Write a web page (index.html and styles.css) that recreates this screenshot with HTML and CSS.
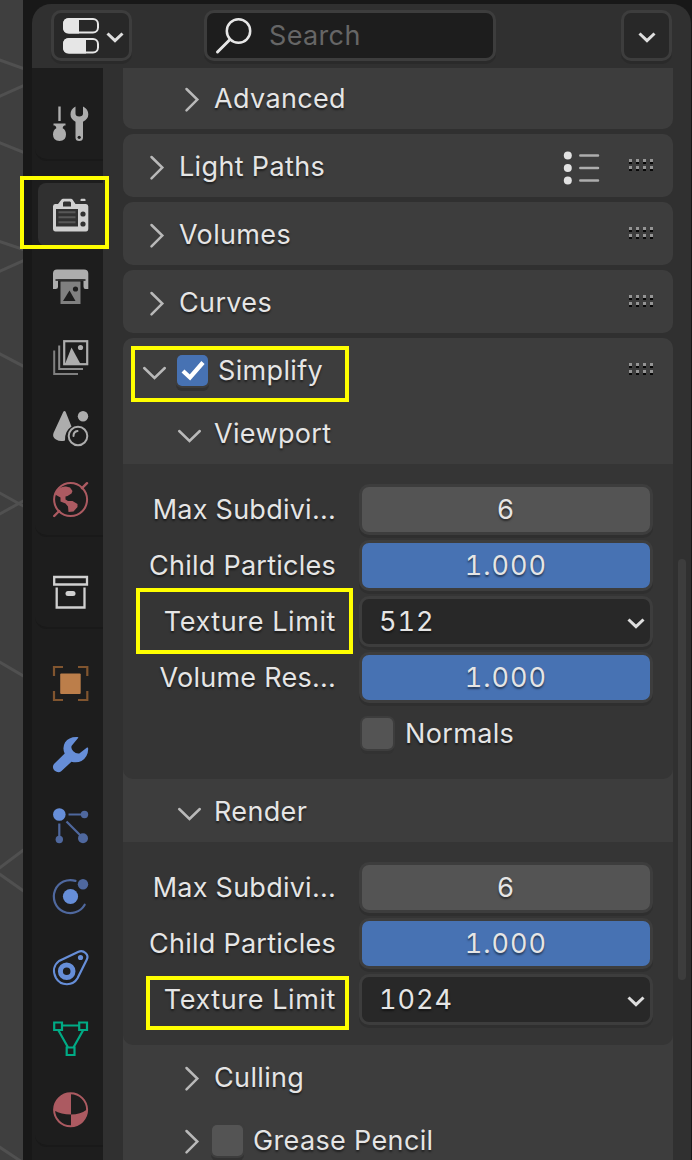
FILE: index.html
```html
<!DOCTYPE html>
<html lang="en">
<head>
    <meta charset="UTF-8">
    <meta name="viewport" content="width=device-width, initial-scale=1.0">
    <title>Render Properties</title>
    <link rel="stylesheet" href="styles.css">
</head>
<body>

<!-- shared icons -->
<svg class="defs" width="0" height="0">
    <symbol id="right" viewBox="0 0 32 31"><path d="M12.5 7 L23.3 17.6 L12.5 28.3" fill="none" stroke="#b9b9b9" stroke-width="2.5" stroke-linecap="round"/></symbol>
    <symbol id="down" viewBox="0 0 32 31"><path d="M5.2 14 L15.5 24 L25.8 14" fill="none" stroke="#b9b9b9" stroke-width="2.5" stroke-linecap="round"/></symbol>
    <symbol id="arrow" viewBox="0 0 18 11"><path d="M1.5 1.5 L9 8.7 L16.5 1.5" fill="none" stroke="#dedede" stroke-width="3"/></symbol>
    <symbol id="grip" viewBox="0 0 24 12">
        <path d="M0 1.5H24M0 8.5H24" stroke="#959595" stroke-width="3" stroke-dasharray="3 4"/>
        <path d="M0 4H24M0 11H24" stroke="#080808" stroke-width="2" stroke-dasharray="3 4"/>
    </symbol>
</svg>

<div class="app">
    <div class="viewport">
        <svg width="23" height="1160" fill="none" stroke="#505050" stroke-width="3">
            <path d="M-2 59.5 L25 69M-2 97 L25 85M-2 142 L25 153M-2 241 L25 250M-2 272 L25 260M-2 353 L25 367M-2 492 L25 507M-2 515 L25 500M-2 661 L25 677M-2 869 L25 849M-2 873 L25 892M-2 1146 L25 1164"/>
        </svg>
    </div>

    <div class="editor">
        <header class="header">
            <button class="btn editor-type">
                <svg width="36" height="36" viewBox="0 0 36 36">
                    <rect x="1" y="1" width="34" height="13.5" rx="5" fill="none" stroke="#e6e6e6" stroke-width="2"/>
                    <path d="M16 0H6Q0 0 0 6V9.500Q0 15.500 6 15.500H16Z" fill="#e6e6e6"/>
                    <rect x="1" y="21" width="34" height="13.500" rx="5" fill="none" stroke="#e6e6e6" stroke-width="2"/>
                    <path d="M23 20H6Q0 20 0 26V29.500Q0 35.500 6 35.500H23Z" fill="#e6e6e6"/>
                </svg>
                <svg width="18" height="11"><use href="#arrow"/></svg>
            </button>
            <div class="search">
                <svg width="36" height="36" viewBox="0 0 36 36" fill="none" stroke="#e6e6e6">
                    <circle cx="22.500" cy="13" r="11.700" stroke-width="2.500"/>
                    <path d="M14 21.500 L1.500 34" stroke-width="3" stroke-linecap="round"/>
                </svg>
                <span>Search</span>
            </div>
            <button class="btn options"><svg width="18" height="11"><use href="#arrow"/></svg></button>
        </header>

        <div class="main">
            <nav class="tabs">
                <div class="group">
                    <div class="tab">
                        <svg width="36" height="36" viewBox="0 0 36 36" fill="#adadad">
                            <path d="M5.300 0.500H7.700V15H5.300ZM0.500 17.500H12.500V19.500H11.200Q9.500 20.500 9.700 22.300Q13 24.200 13 28.500Q13 35 6.500 35Q0 35 0 28.500Q0 24.200 3.300 22.300Q3.500 20.500 1.800 19.500H0.500Z"/>
                            <path d="M22.500 0.500V7.500Q22.500 10.500 26.200 10.500Q30 10.500 30 7.500V0.500Q35.300 3 35.300 8.500Q35.300 13 30 15.800V31.500Q30 35 26.200 35Q22.500 35 22.500 31.500V15.800Q17.500 13 17.500 8.500Q17.500 3 22.500 0.500Z"/>
                            <circle cx="26.200" cy="31.300" r="1.600" fill="#1d1d1d"/>
                        </svg>
                    </div>
                </div>
                <div class="group">
                    <div class="tab active">
                        <svg width="36" height="36" viewBox="0 0 36 36">
                            <path d="M2 6H5L8.500 1.500Q9 0.800 10 0.800H18Q19 0.800 19.500 1.500L22.500 6H33Q35.300 6 35.300 8.500V30.500Q35.300 33.500 33 33.500H2.500Q0 33.500 0 30.500V8.500Q0 6 2 6Z" fill="#cfcfcf"/>
                            <path d="M11 3.500H17L18 4.500V8.500H10V4.500ZM3 11H25V28.500H3Z" fill="#303030"/>
                            <path d="M5.500 14.200H22.500M5.500 19.200H22.500M5.500 24.300H22.500" stroke="#575757" stroke-width="2"/>
                            <circle cx="30" cy="16" r="2.600" fill="#303030"/><circle cx="30" cy="26" r="2.600" fill="#303030"/>
                            <path d="M27.500 3V1.800Q27.500 0.800 28.500 0.800H31.500Q32.500 0.800 32.500 1.800V3Z" fill="#cfcfcf"/>
                        </svg>
                    </div>
                    <div class="tab">
                        <svg width="36" height="36" viewBox="0 0 36 36">
                            <path d="M4 0.500H31Q35.300 0.500 35.300 4.500V20H32.500Q30.500 20 30.500 17.500V10.500H5V17.500Q5 20 2.500 20H0V4.500Q0 0.500 4 0.500Z" fill="#adadad"/>
                            <path d="M2.500 11H32.500" stroke="#303030" stroke-width="1.800"/>
                            <rect x="7.500" y="12.500" width="20" height="22.500" fill="#808080"/>
                            <path d="M10 32L16.500 21.500L22.500 32Z" fill="#1d1d1d"/><circle cx="22.500" cy="20" r="2.600" fill="#1d1d1d"/>
                        </svg>
                    </div>
                    <div class="tab">
                        <svg width="36" height="36" viewBox="0 0 36 36">
                            <path d="M1.200 10.500V34H25" fill="none" stroke="#808080" stroke-width="2"/>
                            <path d="M6.200 5.500V29H30" fill="none" stroke="#8d8d8d" stroke-width="2"/>
                            <rect x="11.200" y="1.200" width="23" height="23" fill="none" stroke="#adadad" stroke-width="2.200"/>
                            <path d="M12 24L18.500 7.500L27.500 24Z" fill="#adadad"/><circle cx="27.500" cy="7.500" r="2.600" fill="#adadad"/>
                        </svg>
                    </div>
                    <div class="tab">
                        <svg width="36" height="36" viewBox="0 0 36 36">
                            <path d="M11.500 0Q10.700 0 10.200 1L0.500 22Q-1 26 3 28.500Q7 31 12 29.500Q11.500 20 18.500 15.500L12.700 1Q12.300 0 11.500 0Z" fill="#adadad"/>
                            <circle cx="30" cy="5.200" r="5.200" fill="#adadad"/>
                            <circle cx="25" cy="25" r="9.300" fill="none" stroke="#adadad" stroke-width="2"/>
                            <path d="M20.500 25Q20.500 20.500 24.500 20" fill="none" stroke="#adadad" stroke-width="2" stroke-linecap="round"/>
                        </svg>
                    </div>
                    <div class="tab">
                        <svg width="36" height="36" viewBox="0 0 36 36">
                            <circle cx="17.600" cy="17.600" r="16.500" fill="none" stroke="#ac5a61" stroke-width="2"/>
                            <path d="M29 6.200L34 1.200M6.200 29L1.200 34" stroke="#ac5a61" stroke-width="2.400" stroke-linecap="round"/>
                            <path d="M2.500 11Q6 4 13 4.500L17 5.500L19.500 9L18.500 11.500L14.500 14L12.500 14.500L12.500 17.500L15 19H19.500L24.500 22V25L20.500 29.500L15.500 30L15 24.500L12.500 21.500L7.500 19.500V15.500L3 13Z" fill="#ac5a61"/>
                        </svg>
                    </div>
                </div>
                <div class="group">
                    <div class="tab">
                        <svg width="36" height="36" viewBox="0 0 36 36" fill="none" stroke="#d0d0d0" stroke-width="2.300">
                            <path d="M1.200 3H34V10.500H1.200ZM3.700 13.500V33.500H31.500V13.500"/>
                            <rect x="12.500" y="17" width="10" height="5" rx="2.500" fill="#d0d0d0" stroke="none"/>
                        </svg>
                    </div>
                </div>
                <div class="group">
                    <div class="tab">
                        <svg width="36" height="36" viewBox="0 0 36 36">
                            <path d="M1 10V1H10M25 1H34.300V10M34.300 25V34H25M10 34H1V25" fill="none" stroke="#81552f" stroke-width="2.200"/>
                            <rect x="7.200" y="7.500" width="20.500" height="20.500" rx="1" fill="#bc7e4a"/>
                        </svg>
                    </div>
                    <div class="tab">
                        <svg width="36" height="36" viewBox="0 0 36 36">
                            <path d="M25.300 0.800L18.700 8.700Q17.500 11.500 20.300 14.200Q23 17 26.300 16.500L34 10.500Q35.300 10 35.200 12Q35 20 28.500 24Q24 26 18.500 24.700L8.500 34Q5.500 36.500 1.700 33.800Q-1.500 30.200 1 27L11.700 16.500Q9 11 12 5.500Q16 -0.500 24.500 0Q25.500 0.200 25.300 0.800Z" fill="#668ed8"/>
                        </svg>
                    </div>
                    <div class="tab">
                        <svg width="36" height="36" viewBox="0 0 36 36">
                            <path d="M15.500 6.500H31M6.300 15.500V31M13.500 13.500L30 30" stroke="#4f689e" stroke-width="2.200"/>
                            <circle cx="6.300" cy="6.500" r="6.300" fill="#668ed8"/><circle cx="31.500" cy="6.500" r="3.700" fill="#4f689e"/>
                            <circle cx="6.300" cy="31.500" r="3.700" fill="#4f689e"/><circle cx="30" cy="30.300" r="5" fill="#4f689e"/>
                        </svg>
                    </div>
                    <div class="tab">
                        <svg width="36" height="36" viewBox="0 0 36 36">
                            <path d="M22.500 1.900A16.500 16.500 0 1 0 31.700 25.700" fill="none" stroke="#4f689e" stroke-width="2.200" stroke-linecap="round"/>
                            <circle cx="17.500" cy="17.500" r="7.600" fill="#668ed8"/><circle cx="30" cy="5.200" r="5.200" fill="#4f689e"/>
                        </svg>
                    </div>
                    <div class="tab">
                        <svg width="36" height="36" viewBox="0 0 36 36" fill="none" stroke="#668ed8">
                            <path d="M6 11L25.500 1.800C30.500 -0.300 36.500 4.500 33.700 9.800L24.500 28.300C20 36 8 36.500 3 28C-0.500 21.500 0.800 15 6 11Z" stroke-width="2.200"/>
                            <circle cx="13.700" cy="21.200" r="6.300" stroke-width="5"/><circle cx="27.500" cy="7.500" r="2.600" fill="#668ed8" stroke="none"/>
                        </svg>
                    </div>
                    <div class="tab">
                        <svg width="36" height="36" viewBox="0 0 36 36" fill="none" stroke="#00ab85" stroke-width="2.200">
                            <path d="M1.200 1.500H9V9H1.200ZM26.200 1.500H34V9H26.200ZM13.700 26.500H21.500V34H13.700ZM9 4.500H26.200M5.500 9.500L14.800 26M30 9.500L20.700 26"/>
                        </svg>
                    </div>
                    <div class="tab">
                        <svg width="36" height="36" viewBox="0 0 36 36">
                            <circle cx="17.600" cy="17.800" r="16.500" fill="none" stroke="#ac5a61" stroke-width="2"/>
                            <path d="M18 1.300V22.500Q8 22.500 1.300 18.500V17.500Q2 2.500 18 1.300ZM18 22.500Q27.500 22.500 34 17.500Q33 33 18 34.300Z" fill="#ac5a61"/>
                        </svg>
                    </div>
                </div>
            </nav>

            <div class="panels">
                <section class="panel cut">
                    <div class="row sub"><svg class="chev"><use href="#right"/></svg><span class="title">Advanced</span></div>
                </section>
                <section class="panel">
                    <div class="row">
                        <svg class="chev"><use href="#right"/></svg><span class="title">Light Paths</span>
                        <svg class="preset" width="36" height="36" viewBox="0 0 36 36">
                            <path d="M16.300 5.500H34M16.300 18H34M16.300 30.500H34" stroke="#adadad" stroke-width="2.500" stroke-linecap="round"/>
                            <g fill="#e2e2e2"><circle cx="3.800" cy="5.500" r="4"/><circle cx="3.800" cy="18" r="4"/><circle cx="3.800" cy="30.500" r="4"/></g>
                        </svg>
                        <svg class="grip"><use href="#grip"/></svg>
                    </div>
                </section>
                <section class="panel">
                    <div class="row"><svg class="chev"><use href="#right"/></svg><span class="title">Volumes</span><svg class="grip"><use href="#grip"/></svg></div>
                </section>
                <section class="panel">
                    <div class="row"><svg class="chev"><use href="#right"/></svg><span class="title">Curves</span><svg class="grip"><use href="#grip"/></svg></div>
                </section>
                <section class="panel simplify">
                    <div class="row">
                        <svg class="chev"><use href="#down"/></svg>
                        <span class="check on">
                            <svg width="31" height="31" viewBox="0 0 31 31"><path d="M6 16L13 22.500L26 7.500" fill="none" stroke="#fff" stroke-width="4.300"/></svg>
                        </span>
                        <span class="title">Simplify</span>
                        <svg class="grip"><use href="#grip"/></svg>
                    </div>
                    <div class="row sub"><svg class="chev"><use href="#down"/></svg><span class="title">Viewport</span></div>
                    <div class="body">
                        <label>Max Subdivi...</label><div class="field number">6</div>
                        <label>Child Particles</label><div class="field slider">1.000</div>
                        <label class="wide">Texture Limit</label><div class="field select">512<svg width="18" height="11"><use href="#arrow"/></svg></div>
                        <label>Volume Res...</label><div class="field slider">1.000</div>
                        <div class="option"><span class="check"></span><span>Normals</span></div>
                    </div>
                    <div class="row sub"><svg class="chev"><use href="#down"/></svg><span class="title">Render</span></div>
                    <div class="body">
                        <label>Max Subdivi...</label><div class="field number">6</div>
                        <label>Child Particles</label><div class="field slider">1.000</div>
                        <label class="wide">Texture Limit</label><div class="field select">1024<svg width="18" height="11"><use href="#arrow"/></svg></div>
                    </div>
                    <div class="row sub"><svg class="chev"><use href="#right"/></svg><span class="title">Culling</span></div>
                    <div class="row sub"><svg class="chev"><use href="#right"/></svg><span class="check"></span><span class="title">Grease Pencil</span></div>
                </section>
            </div>
            <div class="scrollbar"></div>
        </div>
    </div>

    <!-- highlights -->
    <div class="mark mark-tab"></div>
    <div class="mark mark-simplify"></div>
    <div class="mark mark-viewport"></div>
    <div class="mark mark-render"></div>
</div>

</body>
</html>
```
FILE: styles.css
```css
* {
    box-sizing: border-box;
}
body {
    margin: 0;
    background: #181818;
    color: #e5e5e5;
    font-family: Inter, "Liberation Sans", sans-serif;
    font-size: 27px;
    line-height: 32px;
    letter-spacing: 0.35px;
    overflow: hidden;
}
svg {
    display: block;
    flex: none;
    overflow: visible;
}
.defs {
    position: absolute;
}
.app {
    position: relative;
    display: flex;
    width: 692px;
    height: 1160px;
    overflow: hidden;
}
.viewport {
    width: 23px;
    background: #3f3f3f;
    overflow: hidden;
}
.editor {
    width: 659px;
    height: 1156px;
    margin: 4px 1px 0 9px;
    background: #303030;
    border-radius: 19px 19px 0 0;
    overflow: hidden;
}

/* header */
.header {
    display: flex;
    height: 64px;
    padding: 6px 19px 0 19px;
}
.btn, .search {
    display: flex;
    align-items: center;
    height: 51px;
    padding: 0;
    border: 3px solid #3d3d3d;
    border-radius: 10px;
    background: #282828;
    box-shadow: 0 3px 0 #2a2a2a;
}
.editor-type {
    width: 81px;
    padding-left: 9px;
    gap: 7px;
}
.editor-type svg:last-child, .options svg {
    margin-top: 3px;
}
.search {
    width: 292px;
    margin-left: 72px;
    padding-left: 9px;
    gap: 17px;
    background: #1d1d1d;
    color: #666;
}
.options {
    width: 51px;
    margin-left: auto;
    justify-content: center;
}

.main {
    display: flex;
    height: 1092px;
}

/* tabs */
.tabs {
    width: 71px;
    padding-top: 20px;
    background: #1d1d1d;
}
.group {
    margin: 0 0 20px 3px;
    border-bottom: 2px solid #191919;
    border-bottom-left-radius: 12px;
}
.group:first-child {
    margin-bottom: 22px;
}
.group:nth-child(n+2) {
    margin-bottom: 19px;
}
.tab {
    display: flex;
    align-items: center;
    height: 71px;
    padding-left: 18px;
}
.tab.active {
    height: 63px;
    margin: 3px 0 5px 3px;
    padding: 2px 0 0 15px;
    background: #303030;
    border-radius: 8px 0 0 8px;
}

/* panels */
.panels {
    width: 550px;
    margin-left: 20px;
    text-shadow: 0 2px 2px rgba(0,0,0,0.5);
}
.panel {
    height: 63px;
    margin-bottom: 5px;
    background: #3d3d3d;
    border-radius: 10px;
    overflow: hidden;
}
.panel.cut {
    height: 61px;
    border-radius: 0 0 10px 10px;
}
.cut .row {
    margin-top: -2px;
}
.panel.simplify {
    height: auto;
    margin-bottom: 0;
}
.row {
    display: flex;
    align-items: center;
    height: 63px;
    padding: 0 20px 0 16px;
}
.row.sub {
    padding-left: 51px;
}
.title {
    padding-top: 2px;
}
.chev {
    width: 32px;
    height: 31px;
    margin-right: 8px;
}
.grip {
    width: 24px;
    height: 12px;
    margin: 0 0 1px auto;
}
.preset {
    margin: 4px 0 0 auto;
}
.preset + .grip {
    margin-left: 29px;
}
.check {
    width: 31px;
    height: 31px;
    margin: 2px 10px 0 -2px;
    border-radius: 5px;
    background: #545454;
    box-shadow: 0 0 0 2px #3d3d3d, 0 4px 0 1px #323232;
}
.check.on {
    background: #4772b3;
}

.body {
    display: grid;
    grid-template-columns: 213px 294px;
    column-gap: 23px;
    row-gap: 5px;
    padding: 20px 0;
    background: #353535;
    border-radius: 0 0 10px 10px;
}
label {
    line-height: 51px;
    text-align: right;
    white-space: nowrap;
    letter-spacing: 0.25px;
}
label.wide {
    letter-spacing: 0.6px;
}
.field {
    height: 51px;
    border: 3px solid #3d3d3d;
    border-radius: 10px;
    line-height: 45px;
    text-align: center;
    letter-spacing: 1px;
    font-variant-numeric: tabular-nums;
    box-shadow: 0 3px 0 #2f2f2f;
}
.number {
    background: #545454;
}
.slider {
    background: #4772b3;
}
.select {
    display: flex;
    align-items: center;
    justify-content: space-between;
    padding: 0 5px 0 17px;
    background: #282828;
}
.select svg {
    margin-top: 4px;
}
.option {
    grid-column: 2;
    display: flex;
    align-items: center;
    height: 51px;
    padding-left: 3px;
}
.option .check {
    margin: 0 12px 0 0;
}

.scrollbar {
    width: 8px;
    height: 421px;
    margin: 491px 0 0 5px;
    border-radius: 4px;
    background: #3d3d3d;
}

/* yellow highlight frames */
.mark {
    position: absolute;
    border: 4px solid #ff0;
}
.mark-tab {
    left: 20px;
    top: 176px;
    width: 89px;
    height: 73px;
}
.mark-simplify {
    left: 131px;
    top: 346px;
    width: 218px;
    height: 56px;
}
.mark-viewport {
    left: 136px;
    top: 588px;
    width: 217px;
    height: 66px;
}
.mark-render {
    left: 146px;
    top: 976px;
    width: 203px;
    height: 54px;
}
```
